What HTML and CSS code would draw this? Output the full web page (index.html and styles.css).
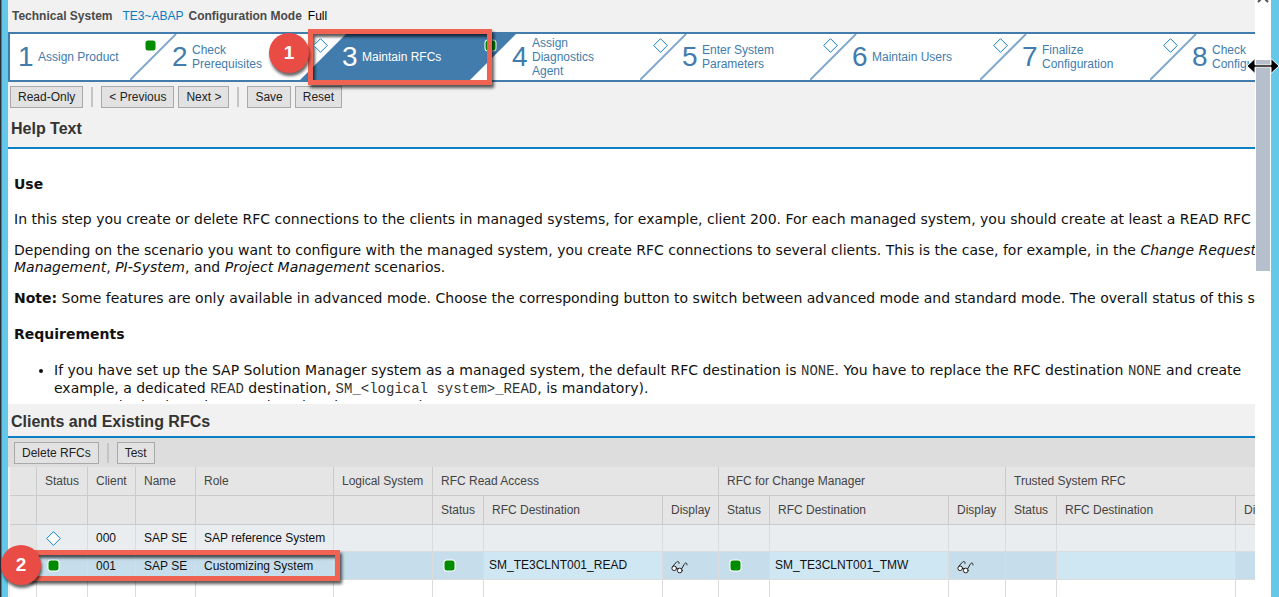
FILE: index.html
```html
<!DOCTYPE html>
<html lang="en">
<head>
<meta charset="utf-8">
<title>Managed System Configuration - Maintain RFCs</title>
<link rel="stylesheet" href="styles.css">
</head>
<body>
<svg class="defs" aria-hidden="true">
  <symbol id="diamond" viewBox="0 0 15 15"><path d="M7.5 .7 14.300 7.500 7.500 14.300 .7 7.500Z" fill="#fff" stroke="#0f82c6" stroke-width="1"/></symbol>
  <symbol id="led" viewBox="0 0 15 15"><rect x="1.500" y="1.500" width="12" height="12" rx="3.500" fill="#fff"/><rect x="2.500" y="2.500" width="10" height="10" rx="2.500" fill="#008c00"/></symbol>
  <symbol id="glasses" viewBox="0 0 17 14"><g fill="#fff" stroke="#222" stroke-width="1" stroke-linecap="round" stroke-linejoin="round"><path d="M8 3.500C8.500 1.200 6.500 .8 5 2.600L1.300 6.800" fill="none"/><circle cx="3.200" cy="8.300" r="2.300"/><circle cx="8.800" cy="10.500" r="2.400"/><path d="M5.400 8q1.200-.5 1.300.9M10.600 8.900 13 4.700C14 2.200 16.300 2.500 16 5" fill="none"/></g></symbol>
  <symbol id="slash" viewBox="0 0 217 46"><path d="M0 46 46 0" stroke="#83a9cc" stroke-width="2" fill="none"/></symbol>
  <symbol id="slab" viewBox="0 0 217 46"><path d="M0 46 46 0H216L170 46Z" fill="#427cac"/></symbol>
</svg>
<div class="window">
<main class="page">
  <header class="system">
    <b>Technical System</b><a class="system-link" href="#">TE3~ABAP</a>
    <b>Configuration Mode</b><span class="mode">Full</span>
  </header>

  <ol class="roadmap">
    <li class="step first"><span class="num">1</span><span class="label">Assign Product</span><svg class="mark"><use href="#led"/></svg></li>
    <li class="step"><svg class="edge"><use href="#slash"/></svg><span class="num">2</span><span class="label">Check<br>Prerequisites</span><svg class="mark"><use href="#diamond"/></svg></li>
    <li class="step active"><svg class="edge"><use href="#slab"/></svg><span class="num">3</span><span class="label">Maintain RFCs</span><svg class="mark"><use href="#led"/></svg><span class="frame"></span><span class="badge">1</span></li>
    <li class="step"><span class="num">4</span><span class="label">Assign<br>Diagnostics<br>Agent</span><svg class="mark"><use href="#diamond"/></svg></li>
    <li class="step"><svg class="edge"><use href="#slash"/></svg><span class="num">5</span><span class="label">Enter System<br>Parameters</span><svg class="mark"><use href="#diamond"/></svg></li>
    <li class="step"><svg class="edge"><use href="#slash"/></svg><span class="num">6</span><span class="label">Maintain Users</span><svg class="mark"><use href="#diamond"/></svg></li>
    <li class="step"><svg class="edge"><use href="#slash"/></svg><span class="num">7</span><span class="label">Finalize<br>Configuration</span><svg class="mark"><use href="#diamond"/></svg></li>
    <li class="step"><svg class="edge"><use href="#slash"/></svg><span class="num">8</span><span class="label">Check<br>Configuration</span></li>
  </ol>

  <div class="toolbar">
    <button class="btn">Read-Only</button><span class="sep"></span>
    <button class="btn">&lt; Previous</button><button class="btn">Next &gt;</button><span class="sep"></span>
    <button class="btn">Save</button><button class="btn">Reset</button>
  </div>

  <h2 class="title">Help Text</h2>
  <section class="help">
    <h3>Use</h3>
    <p>In this step you create or delete RFC connections to the clients in managed systems, for example, client 200. For each managed system, you should create at least a READ RFC</p>
    <p>Depending on the scenario you want to configure with the managed system, you create RFC connections to several clients. This is the case, for example, in the <i>Change Request<br>Management</i>, <i>PI-System</i>, and <i>Project Management</i> scenarios.</p>
    <p><b>Note:</b> Some features are only available in advanced mode. Choose the corresponding button to switch between advanced mode and standard mode. The overall status of this step</p>
    <h3>Requirements</h3>
    <ul>
      <li>If you have set up the SAP Solution Manager system as a managed system, the default RFC destination is <code>NONE</code>. You have to replace the RFC destination <code>NONE</code> and create<br>example, a dedicated <code>READ</code> destination, <code>SM_&lt;logical system&gt;_READ</code>, is mandatory).</li>
      <li class="next">users and roles have been assigned to the managed system</li>
    </ul>
  </section>

  <h2 class="title clients">Clients and Existing RFCs</h2>
  <div class="toolbar grid-tools">
    <button class="btn">Delete RFCs</button><span class="sep"></span><button class="btn">Test</button>
  </div>
  <table class="grid">
    <colgroup><col class="c27"><col class="c51"><col class="c48"><col class="c60"><col class="c138"><col class="c99"><col class="c51"><col class="c179"><col class="c56"><col class="c51"><col class="c179"><col class="c57"><col class="c51"><col class="c179"><col class="c57"></colgroup>
    <thead>
      <tr><th></th><th>Status</th><th>Client</th><th>Name</th><th>Role</th><th>Logical System</th><th colspan="3">RFC Read Access</th><th colspan="3">RFC for Change Manager</th><th colspan="3">Trusted System RFC</th></tr>
      <tr><th></th><th></th><th></th><th></th><th></th><th></th><th>Status</th><th>RFC Destination</th><th>Display</th><th>Status</th><th>RFC Destination</th><th>Display</th><th>Status</th><th>RFC Destination</th><th>Display</th></tr>
    </thead>
    <tbody>
      <tr class="alt"><td class="pick"></td><td><svg class="icon"><use href="#diamond"/></svg></td><td>000</td><td>SAP SE</td><td>SAP reference System</td><td></td><td></td><td></td><td></td><td></td><td></td><td></td><td></td><td></td><td></td></tr>
      <tr class="selected"><td class="pick"><span class="frame row-frame"></span><span class="badge row-badge">2</span></td><td><svg class="icon"><use href="#led"/></svg></td><td>001</td><td>SAP SE</td><td>Customizing System</td><td></td><td><svg class="icon"><use href="#led"/></svg></td><td class="edit">SM_TE3CLNT001_READ</td><td><svg class="icon glasses"><use href="#glasses"/></svg></td><td><svg class="icon"><use href="#led"/></svg></td><td class="edit">SM_TE3CLNT001_TMW</td><td><svg class="icon glasses"><use href="#glasses"/></svg></td><td></td><td class="edit"></td><td></td></tr>
      <tr><td></td><td></td><td></td><td></td><td></td><td></td><td></td><td></td><td></td><td></td><td></td><td></td><td></td><td></td><td></td></tr>
    </tbody>
  </table>
</main>
<aside class="scrollbar"><svg class="arrow" viewBox="0 0 12 8"><path d="M1 7 6 2 11 7" fill="none" stroke="#505050" stroke-width="2"/></svg><div class="thumb"></div>
<svg class="cursor" viewBox="0 0 34 18"><path d="M1 9 9 1.500V7.800H25V1.500L33 9 25 16.500V10.200H9V16.500Z" fill="#000" stroke="#fff" stroke-width="1"/></svg></aside>
</div>
</body>
</html>
```

FILE: styles.css
```css
* { box-sizing: border-box; }
body {
  margin: 0;
  font: 12px/14px "Liberation Sans", Arial, sans-serif;
  color: #333;
}
.defs { display: none; }
.window {
  display: flex;
  height: 100vh;
  overflow: hidden;
  position: relative;
  background: linear-gradient(to right, #2b3038 1px, #4d7f98 1px, #4d7f98 2px, #64c9e9 2px);
}
.page {
  flex: 1;
  min-width: 0;
  padding-left: 8px;
  overflow: hidden;
  background: linear-gradient(#f1f1f1, #f1f1f1) content-box;
}
.system {
  display: flex;
  align-items: center;
  height: 32px;
  padding-left: 4px;
  color: #4a4a4a;
}
.system-link { margin: 0 5px 0 10px; color: #0a7cc4; text-decoration: none; }
.mode { margin-left: 6px; color: #000; }

.roadmap {
  display: flex;
  height: 50px;
  margin: 0;
  padding: 0;
  list-style: none;
  background: #fff;
  border: solid #427cac;
  border-width: 2px 0 2px 2px;
}
.step {
  position: relative;
  flex: none;
  display: flex;
  align-items: center;
  width: 170px;
  padding-left: 42px;
  color: #427cac;
}
.step.first { width: 120px; padding-left: 8px; }
.step.active { color: #fff; z-index: 1; }
.edge { position: absolute; left: 0; top: 0; width: 217px; height: 46px; }
.num { position: relative; width: 20px; font-size: 28px; line-height: 46px; }
.label { position: relative; }
.mark { position: absolute; right: -28px; top: 4px; width: 15px; height: 15px; z-index: 2; }

.frame {
  position: absolute;
  z-index: 3;
  left: 8px;
  top: -5px;
  width: 184px;
  height: 56px;
  border: 5px solid #f06252;
  box-shadow: 2px 3px 3px rgba(0,0,0,.65), inset 2px 3px 3px rgba(0,0,0,.65);
}
.badge {
  position: absolute;
  z-index: 4;
  left: -31px;
  top: -1px;
  width: 40px;
  height: 40px;
  border-radius: 50%;
  background: #e94b45;
  box-shadow: 1px 3px 3px rgba(0,0,0,.6);
  color: #fff;
  font: bold 19px/40px "Liberation Sans", Arial, sans-serif;
  text-align: center;
}
.row-frame { left: 18px; top: -2px; width: 312px; height: 31px; }
.row-badge { left: -9px; top: -7px; }

.toolbar { display: flex; align-items: center; gap: 4px; height: 30px; padding-left: 2px; }
.btn {
  height: 22px;
  padding: 0 7px;
  border: 1px solid #a9a9a9;
  background: #e2e2e2;
  color: #222;
  font: inherit;
}
.sep { width: 2px; height: 20px; margin: 0 4px; background: #c4c4c4; }

.title {
  height: 37px;
  margin: 0;
  padding-left: 3px;
  font-size: 16px;
  line-height: 33px;
  border-bottom: 2px solid #0a7fc4;
}
.title.clients { height: 34px; line-height: 35px; }

.help {
  height: 255px;
  padding: 0 6px;
  overflow: hidden;
  background: #fff;
  border-bottom: 3px solid #fff;
  color: #111;
  font: 14px/17px "DejaVu Sans", Verdana, sans-serif;
  white-space: nowrap;
}
.help h3 { margin: 27px 0 18px; font-size: 14px; line-height: 17px; }
.help p { margin: 0 0 14px; }
.help p + h3 { margin: 19px 0 18px; }
.help ul { margin: 0; padding-left: 40px; line-height: 18px; }
.help code { font: 14px/16px "Liberation Mono", monospace; color: #333; }

.grid-tools { height: 29px; padding-left: 6px; background: #ddd; }
.grid {
  width: 1283px;
  margin-left: 2px;
  table-layout: fixed;
  border-collapse: separate;
  border-spacing: 0;
  background: #fff;
}
.c27 { width: 27px; } .c48 { width: 48px; } .c51 { width: 51px; }
.c56 { width: 56px; } .c57 { width: 57px; } .c60 { width: 60px; }
.c99 { width: 99px; } .c138 { width: 138px; } .c179 { width: 179px; }
.grid th, .grid td {
  height: 28px;
  padding: 0 8px;
  border-right: 1px solid #dcdcdc;
  border-bottom: 1px solid #dcdcdc;
  text-align: left;
  font-weight: normal;
  white-space: nowrap;
  color: #111;
}
.grid th {
  height: 29px;
  background: #e5e5e5;
  border-color: #cbcbcb;
  color: #444;
}
.grid .alt td { height: 27px; background: #e9edf0; }
.grid .selected td { background: #c6ddeb; }
.grid .selected .edit { padding: 0 5px 2px; background: #cfe7f3; }
.grid .alt .pick { background: #e5e5e5; }
.pick { position: relative; }
.icon { display: block; width: 15px; height: 15px; margin-left: 1px; }
.icon.glasses { width: 17px; height: 14px; margin: 2px 0 0; }

.scrollbar {
  position: relative;
  flex: none;
  width: 24px;
  background: #fff;
  border-right: 8px solid #64c9e9;
}
.arrow { position: absolute; left: 2px; top: -5px; width: 12px; height: 8px; }
.thumb { height: 211px; margin: 60px 1px 0; background: #b6c0cc; }
.cursor { position: absolute; right: -9px; top: 57px; width: 34px; height: 18px; }
```
